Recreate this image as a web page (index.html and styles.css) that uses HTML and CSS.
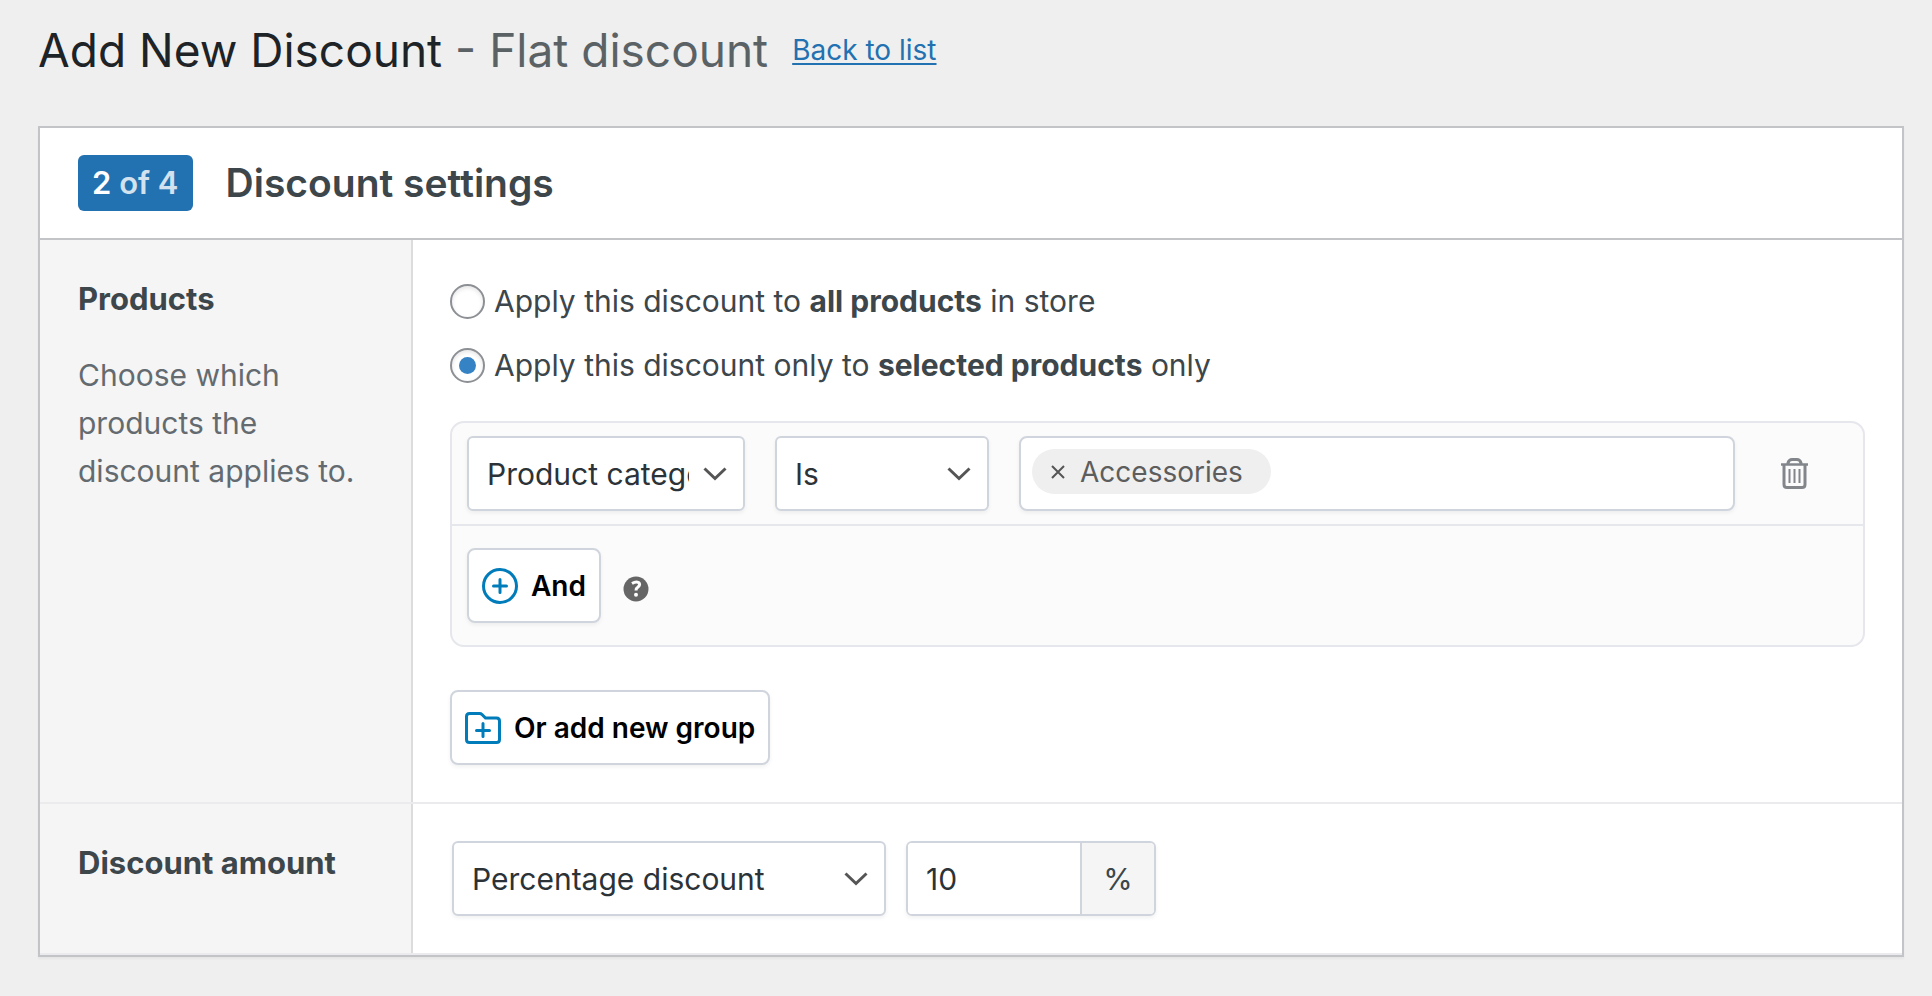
FILE: index.html
```html
<!DOCTYPE html>
<html lang="en">

<head>
  <meta charset="UTF-8">
  <meta name="viewport" content="width=device-width, initial-scale=1.0">
  <title>Add New Discount</title>
  <link rel="stylesheet" href="styles.css">
</head>

<body>
  <header class="page-header">
    <h1 class="page-title">Add New Discount <span class="discount-type">- Flat discount</span></h1>
    <a class="back-link" href="#">Back to list</a>
  </header>

  <form class="panel">
    <div class="panel-header">
      <span class="step">2 <span class="step-total">of 4</span></span>
      <h2 class="panel-title">Discount settings</h2>
    </div>

    <!-- Products -->
    <section class="row">
      <div class="row-label">
        <h3>Products</h3>
        <p>Choose which products the discount applies to.</p>
      </div>
      <div class="row-content">
        <div class="radio-list">
          <label class="radio">
            <input type="radio" name="products" value="all">
            <span>Apply this discount to <b>all products</b> in store</span>
          </label>
          <label class="radio">
            <input type="radio" name="products" value="selected" checked>
            <span>Apply this discount only to <b>selected products</b> only</span>
          </label>
        </div>

        <div class="group">
          <div class="condition">
            <div class="select select-type">
              <select aria-label="Condition type">
                <option>Product category</option>
                <option>Product</option>
              </select>
              <svg class="chevron" viewBox="0 0 24 14"><path d="M1.500 1.500L12 11.500l10.500-10" /></svg>
            </div>
            <div class="select select-operator">
              <select aria-label="Operator">
                <option>Is</option>
                <option>Is not</option>
              </select>
              <svg class="chevron" viewBox="0 0 24 14"><path d="M1.500 1.500L12 11.500l10.500-10" /></svg>
            </div>
            <div class="tags">
              <span class="tag">
                <button type="button" class="tag-remove" aria-label="Remove Accessories">
                  <svg viewBox="0 0 14 14"><path d="M1 1l12 12M13 1L1 13" /></svg>
                </button>
                Accessories
              </span>
              <input type="text" class="tags-input" aria-label="Product categories">
            </div>
            <button type="button" class="delete" aria-label="Delete condition">
              <svg viewBox="0 0 27 31">
                <path d="M0 6.500h27" stroke-width="2.500" />
                <path d="M7 6.500V5q1-3.500 4-3.500h5q3 0 4 3.500v1.500" stroke-width="3" />
                <path d="M3 7v19.500q0 3 3 3h15q3 0 3-3V7" stroke-width="3" />
                <path d="M8.500 11v14M13.500 11v14M18.500 11v14" stroke-width="2" />
              </svg>
            </button>
          </div>
          <div class="group-footer">
            <button type="button" class="button">
              <svg class="icon" viewBox="0 0 36 36">
                <circle cx="18" cy="18" r="16.500" />
                <path d="M18 11.500v13M11.500 18h13" />
              </svg>
              And
            </button>
            <svg class="help" viewBox="0 0 26 26" role="img" aria-label="Help">
              <circle cx="13" cy="13" r="12.500" />
              <path d="M9 7.500q4-2.500 6.500-1 2.500 2-0.500 4.500-2 1.300-2 3.500" />
              <circle class="help-dot" cx="13" cy="18.800" r="2" />
            </svg>
          </div>
        </div>

        <button type="button" class="button button-group">
          <svg class="icon" viewBox="0 0 36 36">
            <path d="M4.500 3.500h10q1.500 0 2.500 1l3.500 3.500h11q3 0 3 3v18.500q0 3-3 3h-27q-3 0-3-3v-23q0-3 3-3z" />
            <path d="M18 13.500v13M11.500 20.500h13" />
          </svg>
          Or add new group
        </button>
      </div>
    </section>

    <!-- Amount -->
    <section class="row">
      <div class="row-label">
        <h3>Discount amount</h3>
      </div>
      <div class="row-content amount">
        <div class="select select-amount">
          <select aria-label="Discount amount type">
            <option>Percentage discount</option>
            <option>Fixed discount</option>
          </select>
          <svg class="chevron" viewBox="0 0 24 14"><path d="M1.500 1.500L12 11.500l10.500-10" /></svg>
        </div>
        <label class="amount-field">
          <input type="text" value="10" inputmode="decimal" aria-label="Amount">
          <span class="amount-unit">%</span>
        </label>
      </div>
    </section>
  </form>
</body>

</html>
```
FILE: styles.css
```css
* {
  box-sizing: border-box;
}

body {
  margin: 0;
  padding: 20px 28px 38px 38px;
  background: #efefef;
  color: #3c464b;
  font-family: Inter, "Liberation Sans", sans-serif;
  font-size: 30px;
  line-height: 48px;
}

h1,
h2,
h3,
p {
  margin: 0;
}

button,
input,
select {
  font: inherit;
  color: inherit;
}

.page-header {
  display: flex;
  align-items: center;
  gap: 24px;
  height: 60px;
  margin-bottom: 46px;
}

.page-title {
  font-size: 46px;
  font-weight: 400;
  color: #1d2327;
}

.discount-type {
  color: #5b6265;
}

.back-link {
  font-size: 28px;
  color: #2271b1;
  text-underline-offset: 3px;
  text-decoration-thickness: 2px;
}

.panel {
  background: #fff;
  border: 2px solid #c3c4c7;
  box-shadow: 0 2px 2px rgba(0, 0, 0, 0.04);
}

.panel-header {
  display: flex;
  align-items: center;
  gap: 33px;
  padding: 27px 38px;
  border-bottom: 2px solid #c3c4c7;
}

.step {
  padding: 4px 14px;
  border-radius: 6px;
  background: #2271b1;
  color: #fff;
  font-size: 31px;
  font-weight: 600;
}

.step-total {
  opacity: 0.8;
}

.panel-title {
  font-size: 39px;
  font-weight: 600;
}

.row {
  display: flex;
  border-bottom: 2px solid #ebebed;
}

.row-label {
  flex: 0 0 373px;
  padding: 35px 38px;
  background: #f5f5f5;
  border-right: 2px solid #dcdcde;
}

.row-label h3 {
  font-size: 31px;
  font-weight: 700;
}

.row-label p {
  margin-top: 28px;
  color: #646b70;
}

.row-content {
  flex: 1;
  min-width: 0;
  padding: 37px;
}

.radio-list {
  display: flex;
  flex-direction: column;
  gap: 16px;
  margin-bottom: 32px;
}

.radio {
  display: flex;
  align-items: center;
  gap: 9px;
}

.radio input {
  appearance: none;
  display: grid;
  place-items: center;
  width: 35px;
  height: 35px;
  margin: 0;
  border: 2px solid #8c8f94;
  border-radius: 50%;
  background: #fff;
  box-shadow: inset 0 2px 4px rgba(0, 0, 0, 0.1);
}

.radio input:checked::before {
  content: "";
  width: 17px;
  height: 17px;
  border-radius: 50%;
  background: #3582c4;
}

.group {
  border: 2px solid #e6e7ec;
  border-radius: 14px;
  background: #fbfbfb;
}

.condition {
  display: flex;
  align-items: center;
  gap: 30px;
  padding: 13px 40px 13px 15px;
  border-bottom: 2px solid #e6e7ec;
}

.select {
  display: grid;
  align-items: center;
}

.select select {
  grid-area: 1 / 1;
  appearance: none;
  width: 100%;
  height: 75px;
  padding: 0 54px 0 18px;
  border: 2px solid #d0d5dd;
  border-radius: 6px;
  background: #fff;
  box-shadow: 0 2px 4px rgba(16, 24, 40, 0.06);
  color: #2c3338;
}

.select-type {
  width: 278px;
}

.select-operator {
  width: 214px;
}

.select-amount {
  width: 434px;
}

.chevron {
  grid-area: 1 / 1;
  justify-self: end;
  width: 24px;
  height: 14px;
  margin-right: 18px;
  fill: none;
  stroke: #555;
  stroke-width: 3;
  pointer-events: none;
}

.tags {
  flex: 1;
  display: flex;
  align-items: flex-start;
  min-width: 0;
  height: 75px;
  padding: 11px;
  border: 2px solid #d0d5dd;
  border-radius: 8px;
  background: #fff;
  box-shadow: 0 2px 4px rgba(16, 24, 40, 0.06);
}

.tag {
  display: flex;
  align-items: center;
  gap: 15px;
  height: 45px;
  padding: 0 28px 0 19px;
  border-radius: 23px;
  background: #efefef;
  color: #5d5d5d;
  font-size: 28px;
}

.tag-remove {
  display: flex;
  padding: 0;
  border: 0;
  background: none;
}

.tag-remove svg {
  width: 14px;
  height: 14px;
  stroke: #555;
  stroke-width: 2;
}

.tags-input {
  flex: 1;
  min-width: 0;
  border: 0;
  outline: 0;
  background: none;
}

.delete {
  display: flex;
  justify-content: center;
  width: 58px;
  padding: 0;
  border: 0;
  background: none;
}

.delete svg {
  width: 27px;
  height: 31px;
  fill: none;
  stroke: #82868b;
}

.group-footer {
  display: flex;
  align-items: center;
  gap: 22px;
  padding: 22px 15px;
}

.button {
  display: flex;
  align-items: center;
  gap: 13px;
  height: 75px;
  padding: 0 13px;
  border: 2px solid #d0d5dd;
  border-radius: 8px;
  background: #fff;
  box-shadow: 0 2px 4px rgba(16, 24, 40, 0.06);
  color: #000;
  font-size: 28px;
  font-weight: 600;
}

.button-group {
  margin-top: 43px;
}

.icon {
  width: 36px;
  height: 36px;
  fill: none;
  stroke: #007cba;
  stroke-width: 3;
  stroke-linecap: round;
}

.help {
  width: 26px;
  height: 26px;
  margin-top: 6px;
  fill: #666;
}

.help path {
  fill: none;
  stroke: #fff;
  stroke-width: 3;
}

.help .help-dot {
  fill: #fff;
}

.amount {
  display: flex;
  gap: 20px;
  padding-left: 39px;
}

.amount-field {
  display: flex;
  width: 250px;
  height: 75px;
  border: 2px solid #d0d5dd;
  border-radius: 6px;
  overflow: hidden;
  box-shadow: 0 2px 4px rgba(16, 24, 40, 0.06);
}

.amount-field input {
  flex: 1;
  min-width: 0;
  padding: 0 18px;
  border: 0;
  outline: 0;
  color: #2c3338;
}

.amount-unit {
  display: flex;
  align-items: center;
  justify-content: center;
  width: 74px;
  border-left: 2px solid #d0d5dd;
  background: #f5f5f5;
}
```
